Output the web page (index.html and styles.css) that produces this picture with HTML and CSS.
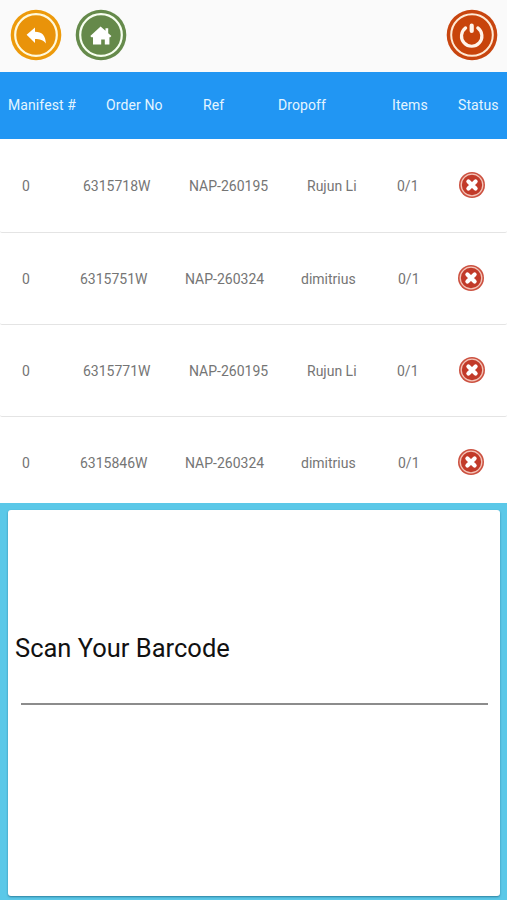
FILE: index.html
```html
<!DOCTYPE html>
<html lang="en">
<head>
<meta charset="utf-8">
<title>Scan Your Barcode</title>
<link rel="stylesheet" href="styles.css">
</head>
<body>
<svg width="0" height="0" class="defs">
  <symbol id="fail" viewBox="0 0 28 28">
    <circle cx="14" cy="14" r="13" fill="#cc5140"/>
    <circle cx="14" cy="14" r="10.8" fill="#c23a29" stroke="#f3c5b9" stroke-width="1.3"/>
    <path d="M10.4 10.4l7.2 7.2M17.6 10.4l-7.2 7.2" stroke="#fff" stroke-width="4.2" stroke-linecap="round"/>
  </symbol>
</svg>
<header class="toolbar">
  <button class="round" aria-label="Back"><svg viewBox="0 0 52 52">
    <circle cx="26" cy="26" r="25.3" fill="#ed9a0b"/>
    <circle cx="26" cy="26" r="20.8" fill="#e9930a" stroke="#fff9dc" stroke-width="2.2"/>
    <path d="M16.6 25.8L25 18.6V22.7C32 22.7 35.5 26.4 35.9 34.4C33.2 31.2 30 30.1 25 30.1V34Z" fill="#fff"/>
  </svg></button>
  <button class="round" aria-label="Home"><svg viewBox="0 0 52 52">
    <circle cx="26" cy="26" r="25.3" fill="#658a4b"/>
    <circle cx="26" cy="26" r="20.8" fill="#65894a" stroke="#f7fff0" stroke-width="2.2"/>
    <path d="M15.3 27L25.6 17.4L30.5 21.7V19.2H33.2V24.2L36.4 27L35.2 28.3H34.4V35.4H29.8V30.6H26.2V35.4H18V28.3H16.4Z" fill="#fff"/>
  </svg></button>
  <button class="round power" aria-label="Log out"><svg viewBox="0 0 52 52">
    <circle cx="26" cy="26" r="25.3" fill="#c8450f"/>
    <circle cx="26" cy="26" r="20.8" fill="#c8440b" stroke="#ffe9d4" stroke-width="2"/>
    <path d="M19.6 18.9A10.2 10.2 0 1 0 31.8 18.9" fill="none" stroke="#fff4ea" stroke-width="3.2" stroke-linecap="round"/>
    <path d="M25.7 16.7V22" stroke="#fff4ea" stroke-width="4.2" stroke-linecap="round"/>
  </svg></button>
</header>
<main>
  <div class="row head"><span>Manifest #</span><span>Order No</span><span>Ref</span><span>Dropoff</span><span>Items</span><span>Status</span></div>
  <section class="list">
    <div class="row item"><span>0</span><span>6315718W</span><span>NAP-260195</span><span>Rujun Li</span><span>0/1</span><svg><use href="#fail"/></svg></div>
    <div class="row item wide"><span>0</span><span>6315751W</span><span>NAP-260324</span><span>dimitrius</span><span>0/1</span><svg><use href="#fail"/></svg></div>
    <div class="row item"><span>0</span><span>6315771W</span><span>NAP-260195</span><span>Rujun Li</span><span>0/1</span><svg><use href="#fail"/></svg></div>
    <div class="row item wide"><span>0</span><span>6315846W</span><span>NAP-260324</span><span>dimitrius</span><span>0/1</span><svg><use href="#fail"/></svg></div>
  </section>
  <section class="scanner">
    <div class="card">
      <label class="prompt" for="code">Scan Your Barcode</label>
      <input id="code" class="code" type="text">
    </div>
  </section>
</main>
</body>
</html>
```
FILE: styles.css
```css
* { box-sizing: border-box; }
body {
  margin: 0;
  height: 900px;
  overflow: hidden;
  font-family: Roboto, "Liberation Sans", sans-serif;
  background: #fff;
}
.defs { display: block; }
.toolbar {
  display: flex;
  gap: 13px;
  height: 72px;
  padding: 9px 9.5px 0 10px;
  background: #fafafa;
}
.round {
  width: 52px;
  height: 52px;
  padding: 0;
  border: 0;
  background: none;
}
.round svg { display: block; }
.power { margin-left: auto; }
.row {
  display: grid;
  align-items: center;
  white-space: nowrap;
}
.head {
  grid-template-columns: 98px 97px 75px 114px 66px 49px;
  height: 67px;
  padding: 0 0 1px 8px;
  background: #2196f3;
  color: #e4f5ff;
  font-size: 14px;
  letter-spacing: 0.1px;
}
.list { height: 364px; overflow: hidden; }
.item {
  grid-template-columns: 61px 106px 118px 90px 61px 28px;
  height: 92px;
  padding-left: 22px;
  border-bottom: 1px solid #e4e4e4;
  border-radius: 2px;
  background: #fff;
  color: #757575;
  font-size: 14px;
}
.item:first-child { height: 94px; }
.wide { grid-template-columns: 58px 105px 116px 97px 58.5px 28px; }
.item svg { width: 28px; height: 28px; margin-top: -1px; }
.scanner {
  height: 397px;
  padding: 7px 7px 4px 8px;
  background: #5bc8e8;
}
.card {
  height: 386px;
  padding: 120px 13px 0 7px;
  border-radius: 3px;
  background: #fff;
  box-shadow: 0 1px 2px rgba(0, 60, 90, 0.5);
}
.prompt {
  display: block;
  height: 36px;
  line-height: 36px;
  color: #111;
  font-size: 25.5px;
}
.code {
  display: block;
  width: 467px;
  height: 39px;
  margin-left: 5.5px;
  padding: 0;
  border: 0;
  border-bottom: 2px solid #8c8c8c;
  background: none;
  font: inherit;
  outline: 0;
}
```
